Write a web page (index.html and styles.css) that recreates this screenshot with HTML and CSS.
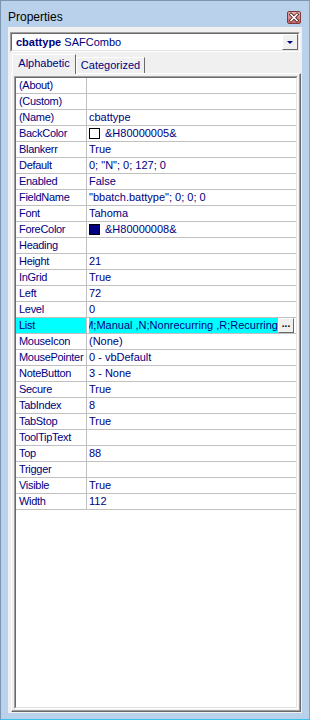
FILE: index.html
```html
<!DOCTYPE html>
<html lang="en">
<head>
    <meta charset="UTF-8">
    <meta name="viewport" content="width=device-width, initial-scale=1.0">
    <title>Properties</title>
    <link rel="stylesheet" href="styles.css">
</head>
<body>
    <div class="window">
        <div class="titlebar">
            <span class="title">Properties</span>
            <span class="close-btn">
                <svg width="12" height="11" viewBox="0 0 12 11">
                    <path d="M3 2.5 L9 8.5 M9 2.5 L3 8.5" stroke="#5a2020" stroke-width="3.2" stroke-linecap="square"/>
                    <path d="M3 2.5 L9 8.5 M9 2.5 L3 8.5" stroke="#ffffff" stroke-width="1.6" stroke-linecap="square"/>
                </svg>
            </span>
        </div>

        <div class="client">
            <div class="combo">
                <span class="combo-text"><b>cbattype</b> SAFCombo</span>
                <span class="combo-btn"><span class="arrow"></span></span>
            </div>

            <div class="tabs">
                <div class="tab active">Alphabetic</div>
                <div class="tab">Categorized</div>
            </div>

            <div class="panel">
                <div class="grid-frame">
                    <div class="grid">
                        <div class="row"><div class="name">(About)</div><div class="value"></div></div>
                        <div class="row"><div class="name">(Custom)</div><div class="value"></div></div>
                        <div class="row"><div class="name">(Name)</div><div class="value">cbattype</div></div>
                        <div class="row"><div class="name">BackColor</div><div class="value"><span class="swatch"></span>&amp;H80000005&amp;</div></div>
                        <div class="row"><div class="name">Blankerr</div><div class="value">True</div></div>
                        <div class="row"><div class="name">Default</div><div class="value">0; "N"; 0; 127; 0</div></div>
                        <div class="row"><div class="name">Enabled</div><div class="value">False</div></div>
                        <div class="row"><div class="name">FieldName</div><div class="value">"bbatch.battype"; 0; 0; 0</div></div>
                        <div class="row"><div class="name">Font</div><div class="value">Tahoma</div></div>
                        <div class="row"><div class="name">ForeColor</div><div class="value"><span class="swatch navy"></span>&amp;H80000008&amp;</div></div>
                        <div class="row"><div class="name">Heading</div><div class="value"></div></div>
                        <div class="row"><div class="name">Height</div><div class="value">21</div></div>
                        <div class="row"><div class="name">InGrid</div><div class="value">True</div></div>
                        <div class="row"><div class="name">Left</div><div class="value">72</div></div>
                        <div class="row"><div class="name">Level</div><div class="value">0</div></div>
                        <div class="row selected">
                            <div class="name">List</div>
                            <div class="value">
                                <span class="edit-text"><span>M;Manual ,N;Nonrecurring ,R;Recurring</span></span>
                                <span class="dots-btn">...</span>
                            </div>
                        </div>
                        <div class="row"><div class="name">MouseIcon</div><div class="value">(None)</div></div>
                        <div class="row"><div class="name">MousePointer</div><div class="value">0 - vbDefault</div></div>
                        <div class="row"><div class="name">NoteButton</div><div class="value">3 - None</div></div>
                        <div class="row"><div class="name">Secure</div><div class="value">True</div></div>
                        <div class="row"><div class="name">TabIndex</div><div class="value">8</div></div>
                        <div class="row"><div class="name">TabStop</div><div class="value">True</div></div>
                        <div class="row"><div class="name">ToolTipText</div><div class="value"></div></div>
                        <div class="row"><div class="name">Top</div><div class="value">88</div></div>
                        <div class="row"><div class="name">Trigger</div><div class="value"></div></div>
                        <div class="row"><div class="name">Visible</div><div class="value">True</div></div>
                        <div class="row"><div class="name">Width</div><div class="value">112</div></div>
                    </div>
                </div>
            </div>
        </div>
    </div>
</body>
</html>
```

FILE: styles.css
```css
body {
    margin: 0;
    font-family: "Liberation Sans", Arial, sans-serif;
    font-size: 11px;
}

.window {
    width: 310px;
    height: 720px;
    box-sizing: border-box;
    background-color: #b9d1ea;
    border: 1px solid;
    border-color: #7d95ae #38c4ea #38c4ea #7d95ae;
}

.titlebar {
    height: 26px;
    display: flex;
    justify-content: space-between;
    align-items: flex-start;
    padding: 0 8px 0 7px;
}

.title {
    margin-top: 9px;
    font-size: 12px;
    line-height: 14px;
    color: #000;
}

.close-btn {
    margin-top: 10px;
    width: 14px;
    height: 13px;
    box-sizing: border-box;
    border: 1px solid #7b3b3b;
    border-radius: 2px;
    background: linear-gradient(#e6b0b0, #c86a6a);
    display: flex;
    align-items: center;
    justify-content: center;
}

.client {
    margin: 0 7px;
    height: 686px;
    box-sizing: border-box;
    background-color: #f0f0f0;
    padding: 5px 2px 1px 2px;
}

/* object selector */
.combo {
    width: 290px;
    height: 20px;
    box-sizing: border-box;
    border: 1px solid;
    border-color: #a0a0a0 #ffffff #ffffff #a0a0a0;
    background-color: #fff;
    display: flex;
    align-items: center;
    position: relative;
}

.combo::before {
    content: "";
    position: absolute;
    inset: 0;
    border: 1px solid;
    border-color: #696969 #e3e3e3 #e3e3e3 #696969;
    pointer-events: none;
}

.combo-text {
    flex: 1;
    padding-left: 5px;
    color: #000080;
    white-space: nowrap;
}

.combo-btn {
    width: 16px;
    height: 16px;
    box-sizing: border-box;
    margin-right: 1px;
    background-color: #f0f0f0;
    border: 1px solid;
    border-color: #ffffff #696969 #696969 #ffffff;
    display: flex;
    align-items: center;
    justify-content: center;
}

.arrow {
    width: 0;
    height: 0;
    border-left: 3px solid transparent;
    border-right: 3px solid transparent;
    border-top: 3px solid #000080;
}

/* tabs */
.tabs {
    display: flex;
    align-items: flex-end;
    height: 19px;
    margin: 2px 0 0 2px;
}

.tab {
    width: 69px;
    height: 16px;
    box-sizing: border-box;
    border: 1px solid;
    border-bottom: none;
    border-color: #ffffff #696969 #696969 #ffffff;
    text-align: center;
    line-height: 15px;
    color: #000080;
    background-color: #f0f0f0;
}

.tab.active {
    width: 64px;
    height: 20px;
    margin-bottom: -1px;
    line-height: 16px;
    position: relative;
    z-index: 1;
}

/* property page */
.panel {
    width: 290px;
    height: 639px;
    box-sizing: border-box;
    margin-left: 1px;
    padding: 2px;
    border: 1px solid;
    border-color: #ffffff #696969 #696969 #ffffff;
    box-shadow: inset -1px -1px #a0a0a0;
}

.grid-frame {
    height: 100%;
    box-sizing: border-box;
    border: 1px solid;
    border-color: #a0a0a0 #ffffff #ffffff #a0a0a0;
}

.grid {
    height: 100%;
    box-sizing: border-box;
    border: 1px solid;
    border-color: #696969 #e3e3e3 #e3e3e3 #696969;
    background-color: #fff;
}

.row {
    display: flex;
    height: 16px;
    box-sizing: border-box;
    border-bottom: 1px solid #c0c0c0;
    line-height: 15px;
    color: #000080;
}

.name {
    width: 71px;
    flex-shrink: 0;
    box-sizing: border-box;
    padding-left: 3px;
    border-right: 1px solid #c0c0c0;
    letter-spacing: -0.3px;
    white-space: nowrap;
}

.value {
    flex: 1;
    min-width: 0;
    padding-left: 2px;
    display: flex;
    align-items: center;
    white-space: nowrap;
    overflow: hidden;
}

.swatch {
    width: 11px;
    height: 11px;
    box-sizing: border-box;
    border: 1px solid #000;
    background-color: #fff;
    margin-right: 5px;
    flex-shrink: 0;
}

.swatch.navy {
    background-color: #000080;
}

.selected .name {
    background-color: #00ffff;
}

.edit-text {
    flex: 1;
    min-width: 0;
    height: 15px;
    display: flex;
    justify-content: flex-end;
    overflow: hidden;
    background-color: #00ffff;
}

.dots-btn {
    width: 16px;
    height: 15px;
    box-sizing: border-box;
    margin-right: 2px;
    border: 1px solid;
    border-color: #ffffff #696969 #696969 #ffffff;
    background-color: #f0f0f0;
    color: #000;
    font-weight: bold;
    font-size: 10px;
    line-height: 10px;
    text-align: center;
}
```
